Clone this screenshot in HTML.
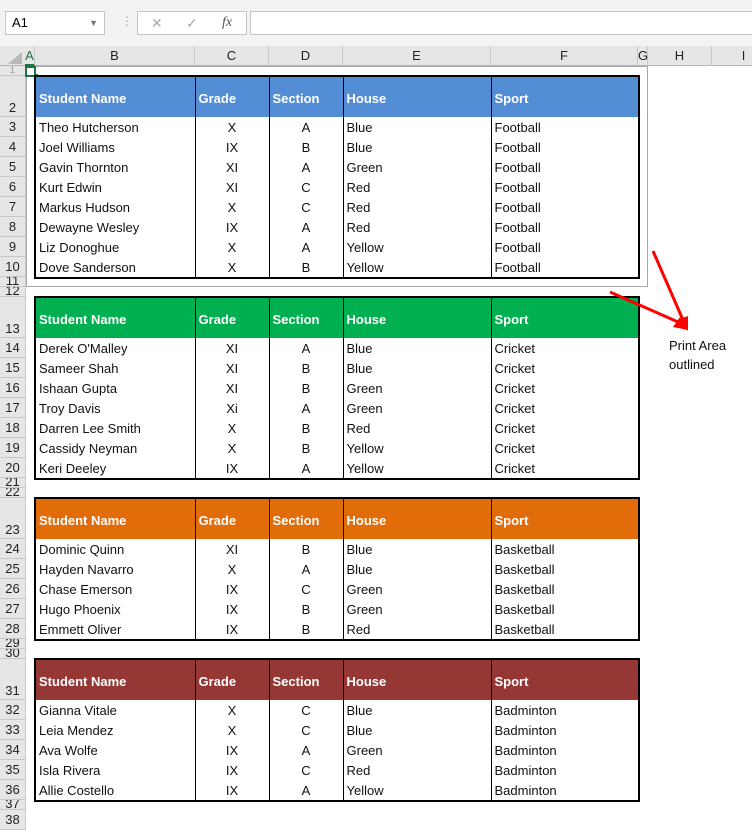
<!DOCTYPE html>
<html><head><meta charset="utf-8"><style>
body{margin:0;width:752px;height:825px;overflow:hidden;background:#fff;font-family:"Liberation Sans",sans-serif;position:relative}
.a{position:absolute}
.rh{position:absolute;left:0;width:25px;background:#e6e6e6;border-bottom:1px solid #c8c8c8;box-sizing:border-box;font-size:13px;color:#222;text-align:center;overflow:hidden;line-height:1}
.ch{position:absolute;top:46px;height:20px;line-height:20px;text-align:center;font-size:13px;color:#222;border-right:1px solid #c8c8c8;box-sizing:border-box}
table{position:absolute;left:34px;border-collapse:collapse;border:2px solid #000;font-size:13px;table-layout:fixed}
td{height:20px;padding:1px 3px 0;white-space:nowrap;border-left:1px solid #000;border-right:1px solid #000;color:#111;box-sizing:border-box;line-height:19px}
tr.h td{height:41px;color:#fff;font-weight:bold;padding-top:2px}
td.c{text-align:center}
</style></head><body>
<div class="a" style="left:0;top:0;width:752px;height:46px;background:#f3f3f3"></div>
<div class="a" style="left:5px;top:11px;width:100px;height:24px;background:#fff;border:1px solid #c6c6c6;box-sizing:border-box;font-size:13px;line-height:22px;padding-left:6px">A1<span style="position:absolute;right:6px;top:0;font-size:9px;color:#777">▼</span></div>
<div class="a" style="left:121px;top:14px;color:#aaa;font-size:12px">⋮</div>
<div class="a" style="left:137px;top:11px;width:110px;height:24px;background:#fff;border:1px solid #c6c6c6;box-sizing:border-box;font-size:14px;color:#aaa;line-height:22px"><span style="position:absolute;left:13px">✕</span><span style="position:absolute;left:48px">✓</span><span style="position:absolute;left:84px;font-style:italic;font-family:'Liberation Serif',serif;color:#555">fx</span></div>
<div class="a" style="left:250px;top:11px;width:510px;height:24px;background:#fff;border:1px solid #c6c6c6;box-sizing:border-box"></div>
<div class="a" style="left:0;top:46px;width:752px;height:20px;background:#e6e6e6;border-bottom:1px solid #b5b5b5;box-sizing:border-box"></div>
<div class="a" style="left:8px;top:52px;width:0;height:0;border-left:14px solid transparent;border-bottom:12px solid #b8b8b8"></div>
<div class="ch" style="left:25px;width:10px;color:#217346;border-bottom:2px solid #217346">A</div>
<div class="ch" style="left:35px;width:160px">B</div>
<div class="ch" style="left:195px;width:74px">C</div>
<div class="ch" style="left:269px;width:74px">D</div>
<div class="ch" style="left:343px;width:148px">E</div>
<div class="ch" style="left:491px;width:147px">F</div>
<div class="ch" style="left:638px;width:10px">G</div>
<div class="ch" style="left:648px;width:64px">H</div>
<div class="ch" style="left:712px;width:64px">I</div>
<div class="a" style="left:0;top:66px;width:25px;height:764px;background:#e6e6e6;border-right:1px solid #c8c8c8"></div>
<div class="rh" style="top:66px;height:10px;font-size:9px;color:#999">1</div>
<div class="rh" style="top:76px;height:41px;padding-top:25px">2</div>
<div class="rh" style="top:117px;height:20px;line-height:20px">3</div>
<div class="rh" style="top:137px;height:20px;line-height:20px">4</div>
<div class="rh" style="top:157px;height:20px;line-height:20px">5</div>
<div class="rh" style="top:177px;height:20px;line-height:20px">6</div>
<div class="rh" style="top:197px;height:20px;line-height:20px">7</div>
<div class="rh" style="top:217px;height:20px;line-height:20px">8</div>
<div class="rh" style="top:237px;height:20px;line-height:20px">9</div>
<div class="rh" style="top:257px;height:20px;line-height:20px">10</div>
<div class="rh" style="top:277px;height:10px;line-height:8px">11</div>
<div class="rh" style="top:287px;height:10px;line-height:8px">12</div>
<div class="rh" style="top:297px;height:41px;padding-top:25px">13</div>
<div class="rh" style="top:338px;height:20px;line-height:20px">14</div>
<div class="rh" style="top:358px;height:20px;line-height:20px">15</div>
<div class="rh" style="top:378px;height:20px;line-height:20px">16</div>
<div class="rh" style="top:398px;height:20px;line-height:20px">17</div>
<div class="rh" style="top:418px;height:20px;line-height:20px">18</div>
<div class="rh" style="top:438px;height:20px;line-height:20px">19</div>
<div class="rh" style="top:458px;height:20px;line-height:20px">20</div>
<div class="rh" style="top:478px;height:10px;line-height:8px">21</div>
<div class="rh" style="top:488px;height:10px;line-height:8px">22</div>
<div class="rh" style="top:498px;height:41px;padding-top:25px">23</div>
<div class="rh" style="top:539px;height:20px;line-height:20px">24</div>
<div class="rh" style="top:559px;height:20px;line-height:20px">25</div>
<div class="rh" style="top:579px;height:20px;line-height:20px">26</div>
<div class="rh" style="top:599px;height:20px;line-height:20px">27</div>
<div class="rh" style="top:619px;height:20px;line-height:20px">28</div>
<div class="rh" style="top:639px;height:10px;line-height:8px">29</div>
<div class="rh" style="top:649px;height:10px;line-height:8px">30</div>
<div class="rh" style="top:659px;height:41px;padding-top:25px">31</div>
<div class="rh" style="top:700px;height:20px;line-height:20px">32</div>
<div class="rh" style="top:720px;height:20px;line-height:20px">33</div>
<div class="rh" style="top:740px;height:20px;line-height:20px">34</div>
<div class="rh" style="top:760px;height:20px;line-height:20px">35</div>
<div class="rh" style="top:780px;height:20px;line-height:20px">36</div>
<div class="rh" style="top:800px;height:10px;line-height:8px">37</div>
<div class="rh" style="top:810px;height:20px;line-height:20px">38</div>
<div class="a" style="left:26px;top:66px;width:622px;height:221px;border:1px solid #a8a8a8;box-sizing:border-box"></div>
<div class="a" style="left:25px;top:66px;width:11px;height:11px;border:2px solid #217346;box-sizing:border-box"></div>
<div class="a" style="left:34px;top:74px;width:4px;height:4px;background:#217346"></div>

<table style="top:75px;width:604px"><colgroup><col style="width:160px"><col style="width:74px"><col style="width:74px"><col style="width:148px"><col style="width:148px"></colgroup>
<tr class="h" style="background:#538dd5"><td>Student Name</td><td>Grade</td><td>Section</td><td>House</td><td>Sport</td></tr>
<tr><td>Theo Hutcherson</td><td class="c">X</td><td class="c">A</td><td>Blue</td><td>Football</td></tr>
<tr><td>Joel Williams</td><td class="c">IX</td><td class="c">B</td><td>Blue</td><td>Football</td></tr>
<tr><td>Gavin Thornton</td><td class="c">XI</td><td class="c">A</td><td>Green</td><td>Football</td></tr>
<tr><td>Kurt Edwin</td><td class="c">XI</td><td class="c">C</td><td>Red</td><td>Football</td></tr>
<tr><td>Markus Hudson</td><td class="c">X</td><td class="c">C</td><td>Red</td><td>Football</td></tr>
<tr><td>Dewayne Wesley</td><td class="c">IX</td><td class="c">A</td><td>Red</td><td>Football</td></tr>
<tr><td>Liz Donoghue</td><td class="c">X</td><td class="c">A</td><td>Yellow</td><td>Football</td></tr>
<tr><td>Dove Sanderson</td><td class="c">X</td><td class="c">B</td><td>Yellow</td><td>Football</td></tr>
</table>

<table style="top:296px;width:604px"><colgroup><col style="width:160px"><col style="width:74px"><col style="width:74px"><col style="width:148px"><col style="width:148px"></colgroup>
<tr class="h" style="background:#00b050"><td>Student Name</td><td>Grade</td><td>Section</td><td>House</td><td>Sport</td></tr>
<tr><td>Derek O'Malley</td><td class="c">XI</td><td class="c">A</td><td>Blue</td><td>Cricket</td></tr>
<tr><td>Sameer Shah</td><td class="c">XI</td><td class="c">B</td><td>Blue</td><td>Cricket</td></tr>
<tr><td>Ishaan Gupta</td><td class="c">XI</td><td class="c">B</td><td>Green</td><td>Cricket</td></tr>
<tr><td>Troy Davis</td><td class="c">Xi</td><td class="c">A</td><td>Green</td><td>Cricket</td></tr>
<tr><td>Darren Lee Smith</td><td class="c">X</td><td class="c">B</td><td>Red</td><td>Cricket</td></tr>
<tr><td>Cassidy Neyman</td><td class="c">X</td><td class="c">B</td><td>Yellow</td><td>Cricket</td></tr>
<tr><td>Keri Deeley</td><td class="c">IX</td><td class="c">A</td><td>Yellow</td><td>Cricket</td></tr>
</table>

<table style="top:497px;width:604px"><colgroup><col style="width:160px"><col style="width:74px"><col style="width:74px"><col style="width:148px"><col style="width:148px"></colgroup>
<tr class="h" style="background:#e26b0a"><td>Student Name</td><td>Grade</td><td>Section</td><td>House</td><td>Sport</td></tr>
<tr><td>Dominic Quinn</td><td class="c">XI</td><td class="c">B</td><td>Blue</td><td>Basketball</td></tr>
<tr><td>Hayden Navarro</td><td class="c">X</td><td class="c">A</td><td>Blue</td><td>Basketball</td></tr>
<tr><td>Chase Emerson</td><td class="c">IX</td><td class="c">C</td><td>Green</td><td>Basketball</td></tr>
<tr><td>Hugo Phoenix</td><td class="c">IX</td><td class="c">B</td><td>Green</td><td>Basketball</td></tr>
<tr><td>Emmett Oliver</td><td class="c">IX</td><td class="c">B</td><td>Red</td><td>Basketball</td></tr>
</table>

<table style="top:658px;width:604px"><colgroup><col style="width:160px"><col style="width:74px"><col style="width:74px"><col style="width:148px"><col style="width:148px"></colgroup>
<tr class="h" style="background:#953735"><td>Student Name</td><td>Grade</td><td>Section</td><td>House</td><td>Sport</td></tr>
<tr><td>Gianna Vitale</td><td class="c">X</td><td class="c">C</td><td>Blue</td><td>Badminton</td></tr>
<tr><td>Leia Mendez</td><td class="c">X</td><td class="c">C</td><td>Blue</td><td>Badminton</td></tr>
<tr><td>Ava Wolfe</td><td class="c">IX</td><td class="c">A</td><td>Green</td><td>Badminton</td></tr>
<tr><td>Isla Rivera</td><td class="c">IX</td><td class="c">C</td><td>Red</td><td>Badminton</td></tr>
<tr><td>Allie Costello</td><td class="c">IX</td><td class="c">A</td><td>Yellow</td><td>Badminton</td></tr>
</table>

<svg class="a" style="left:0;top:0" width="752" height="825">
<g stroke="#f00" stroke-width="3" fill="none"><line x1="653" y1="251" x2="683" y2="320"/><line x1="610" y1="292" x2="678" y2="322"/></g>
<polygon points="688,331 677,320 688,316" fill="#f00"/>
<polygon points="688,330 673,327 680,317" fill="#f00"/>
</svg>
<div class="a" style="left:669px;top:336px;font-size:13px;line-height:19px;color:#111">Print Area<br>outlined</div>
</body></html>
